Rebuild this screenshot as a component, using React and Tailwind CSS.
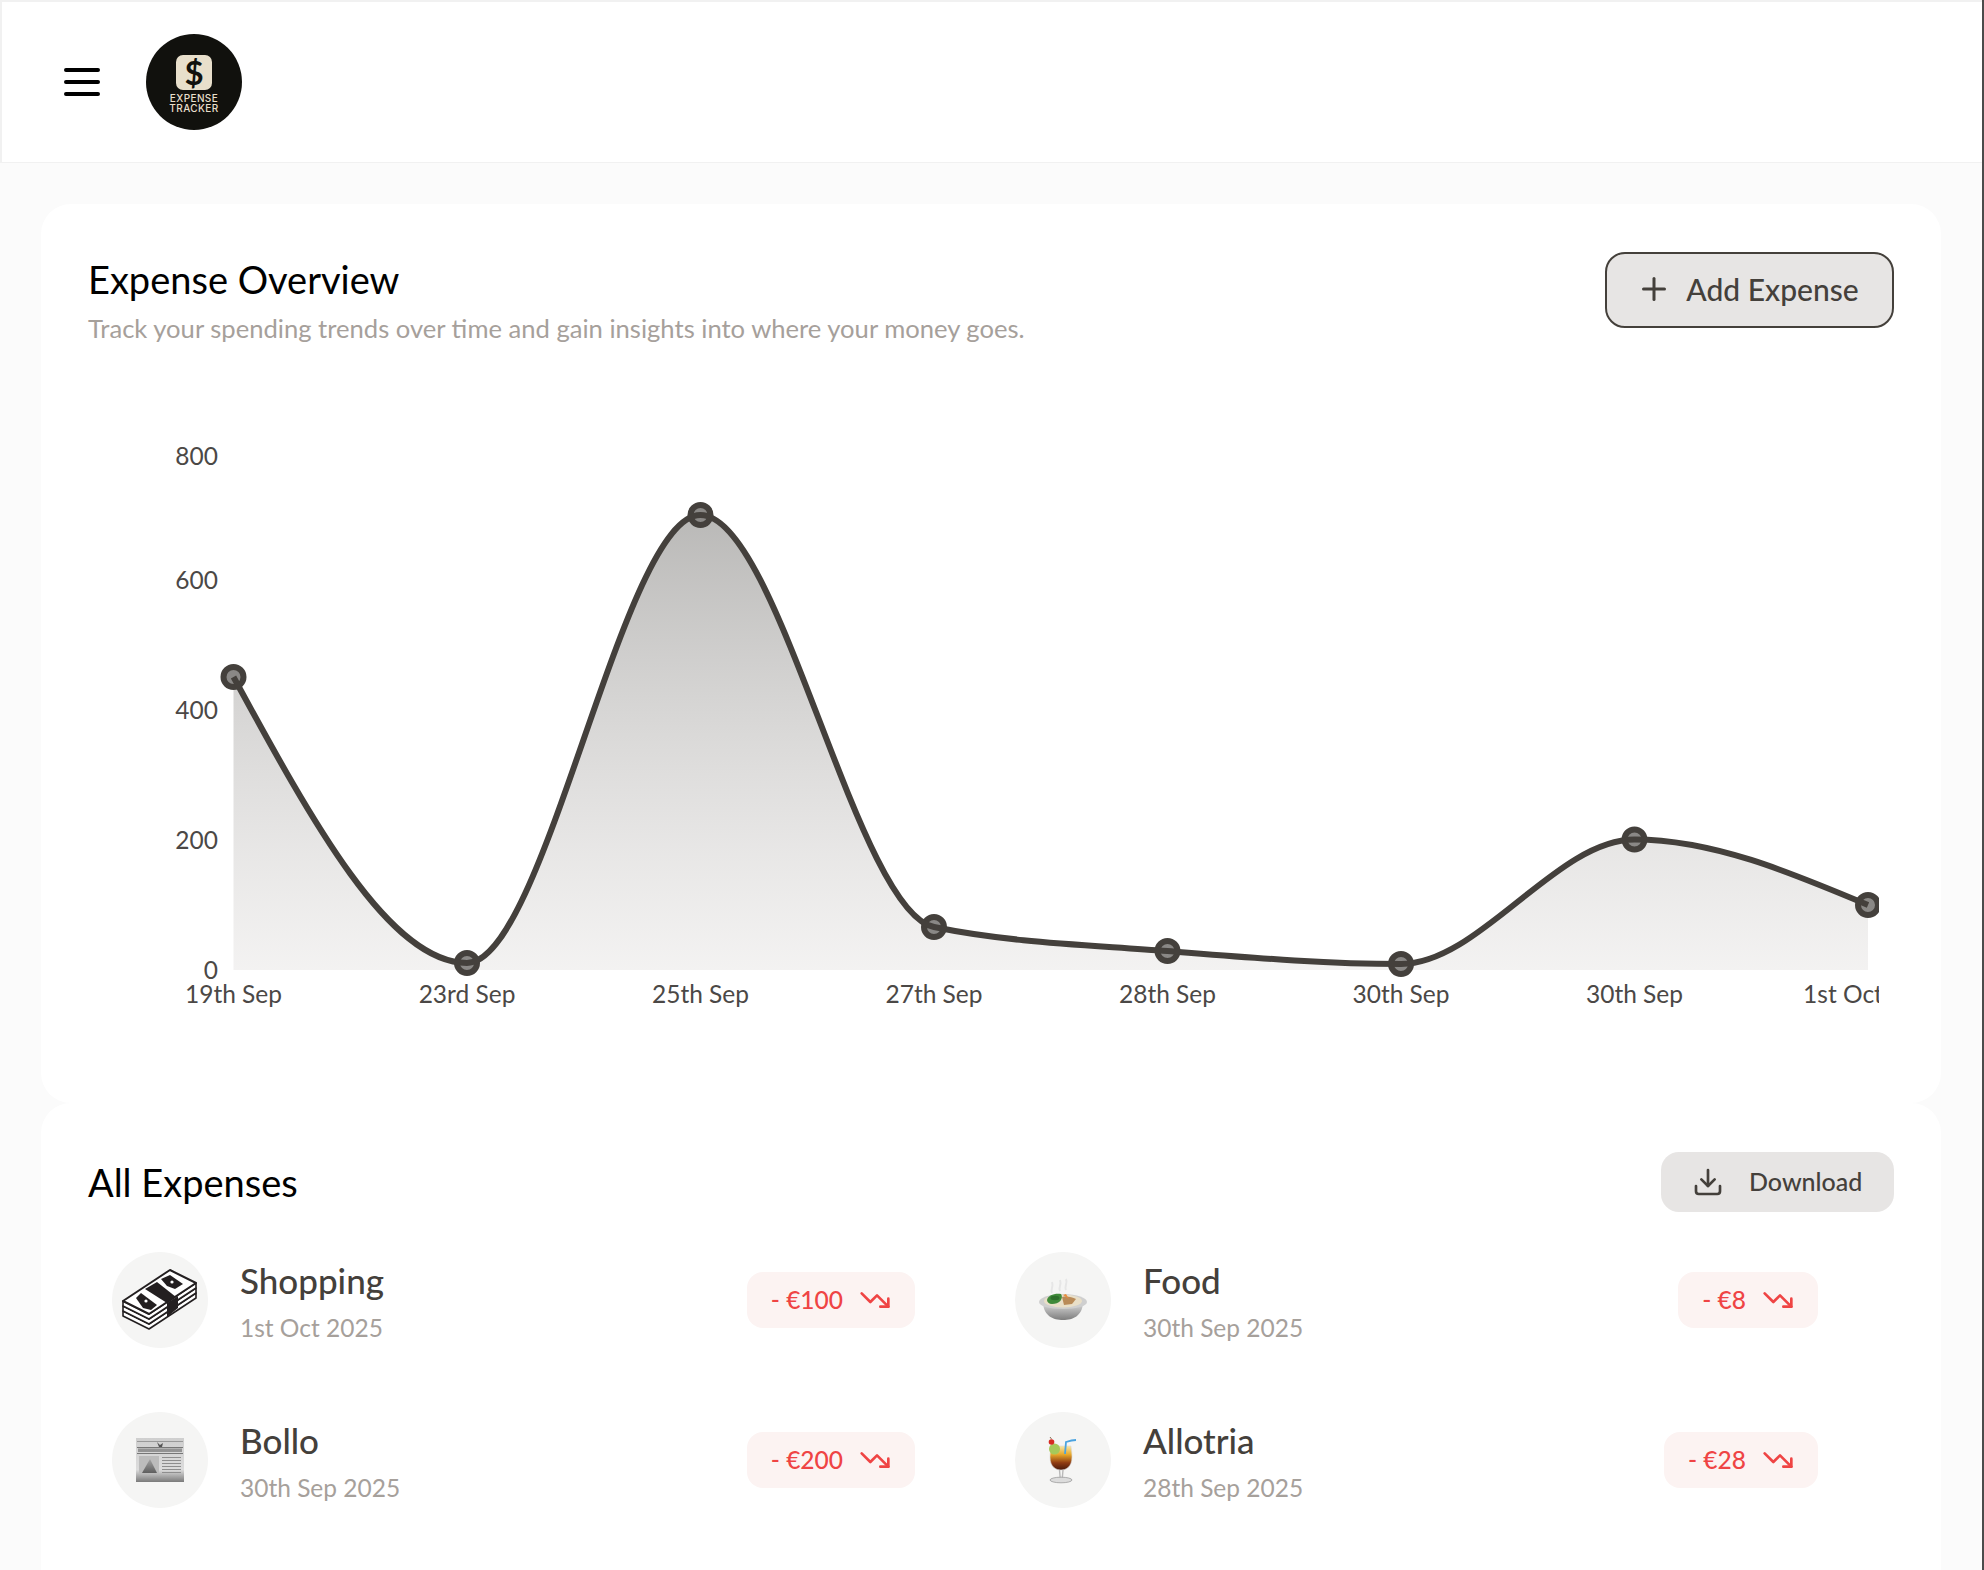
import React from "react";
import { Plus, Download, TrendingDown } from "lucide-react";

const fontFamily = { fontFamily: "Lato, 'Open Sans', sans-serif" };

const chartPoints = [
  { label: "19th Sep", x: 233.5, y: 677 },
  { label: "23rd Sep", x: 467, y: 963 },
  { label: "25th Sep", x: 700.5, y: 515 },
  { label: "27th Sep", x: 934, y: 927 },
  { label: "28th Sep", x: 1167.5, y: 951 },
  { label: "30th Sep", x: 1401, y: 964 },
  { label: "30th Sep", x: 1634.5, y: 839.5 },
  { label: "1st Oct", x: 1868, y: 905, labelX: 1843 },
];

const yTicks = [
  { label: "800", y: 456 },
  { label: "600", y: 580 },
  { label: "400", y: 710 },
  { label: "200", y: 840 },
  { label: "0", y: 970 },
];

// same maths as d3 curveMonotoneX
const monotonePath = (pts) => {
  const n = pts.length;
  const d = [];
  const m = [];
  for (let i = 0; i < n - 1; i++) d.push((pts[i + 1].y - pts[i].y) / (pts[i + 1].x - pts[i].x));
  for (let i = 1; i < n - 1; i++) {
    const h0 = pts[i].x - pts[i - 1].x;
    const h1 = pts[i + 1].x - pts[i].x;
    const p = (d[i - 1] * h1 + d[i] * h0) / (h0 + h1);
    m[i] = (Math.sign(d[i - 1]) + Math.sign(d[i])) * Math.min(Math.abs(d[i - 1]), Math.abs(d[i]), 0.5 * Math.abs(p)) || 0;
  }
  m[0] = (3 * d[0] - m[1]) / 2;
  m[n - 1] = (3 * d[n - 2] - m[n - 2]) / 2;
  let path = `M${pts[0].x},${pts[0].y}`;
  for (let i = 0; i < n - 1; i++) {
    const h = (pts[i + 1].x - pts[i].x) / 3;
    path += `C${pts[i].x + h},${pts[i].y + h * m[i]} ${pts[i + 1].x - h},${pts[i + 1].y - h * m[i + 1]} ${pts[i + 1].x},${pts[i + 1].y}`;
  }
  return path;
};

const MoneyIcon = () => (
  <svg width="76" height="62" viewBox="-1 -1 76 62">
    <g fill="#fff" stroke="#231f20" strokeWidth="1.6" strokeLinejoin="round">
      <path d="M0 46 L26 59 L73 28 L73 23 L26 54 L0 41Z" />
      <path d="M0 41 L26 54 L73 23 L73 18 L26 49 L0 36Z" />
      <path d="M0 36 L26 49 L73 18 L73 13 L26 44 L0 31Z" />
      <path d="M0 31 L26 44 L73 13 L47 0Z" strokeWidth="2" />
    </g>
    <path d="M13 28 L18 23 L34 35 L28 40 L20 38Z" fill="#231f20" />
    <path d="M22 19 L34 12 L53 27 L44 33Z" fill="#231f20" />
    <path d="M38 9 L47 5 L60 14 L52 19 L44 16Z" fill="#231f20" />
    <path d="M44 33 L55 26 L55 38 L44 47Z" fill="#231f20" />
    <circle cx="23" cy="31" r="1.6" fill="#fff" />
    <circle cx="49" cy="12" r="1.6" fill="#fff" />
  </svg>
);

const NewsIcon = () => (
  <svg width="48" height="44" viewBox="0 0 48 44">
    <defs>
      <linearGradient id="paperFade" x1="0" y1="0" x2="0" y2="1">
        <stop offset="0" stopColor="#cfcfcf" />
        <stop offset="0.72" stopColor="#dcdcdc" />
        <stop offset="1" stopColor="#7a7a7a" />
      </linearGradient>
      <linearGradient id="peakFade" x1="0" y1="0" x2="0" y2="1">
        <stop offset="0" stopColor="#a5a5a5" />
        <stop offset="1" stopColor="#5e5e5e" />
      </linearGradient>
    </defs>
    <rect x="0" y="0" width="48" height="44" fill="url(#paperFade)" />
    <path d="M21 4 L24 7 L27 5 L26 9 L23 9Z" fill="#555" />
    <rect x="1" y="3" width="46" height="1" fill="#999" />
    <rect x="1" y="9" width="46" height="1" fill="#777" />
    <rect x="2" y="10.5" width="44" height="3.5" fill="#7d7d7d" opacity="0.75" />
    <rect x="1" y="15" width="46" height="1" fill="#777" />
    <rect x="3" y="18" width="20" height="18" fill="#bcbcbc" />
    <path d="M6 35 L14 21 L21 35Z" fill="url(#peakFade)" />
    <g fill="#8e8e8e">
      <rect x="26" y="19" width="19" height="1" />
      <rect x="26" y="22" width="19" height="1" />
      <rect x="26" y="25" width="19" height="1" />
      <rect x="26" y="28" width="19" height="1" />
      <rect x="26" y="31" width="19" height="1" />
      <rect x="26" y="34" width="19" height="1" />
    </g>
  </svg>
);

const SoupIcon = () => (
  <svg width="48" height="44" viewBox="0 0 48 44">
    <defs>
      <linearGradient id="bowlFill" x1="0" y1="0" x2="0" y2="1">
        <stop offset="0" stopColor="#d9d9d9" />
        <stop offset="1" stopColor="#7d7d7d" />
      </linearGradient>
    </defs>
    <path d="M13 15 C11 11 15 9 13 4 M21 13 C19 9 23 7 21 2 M27 12 C25 8 29 5 27 1" stroke="#e6e6e6" strokeWidth="2" fill="none" />
    <path d="M4 25 C5 38 14 42 24 42 C34 42 43 38 44 25Z" fill="url(#bowlFill)" />
    <path d="M0 24 C0 20 10 16 24 16 C38 16 48 20 48 24 C48 28 38 31 24 31 C10 31 0 28 0 24Z" fill="#cfcfcf" />
    <ellipse cx="24" cy="23" rx="19" ry="6.5" fill="#e9dfc8" />
    <path d="M8 22 C9 17 16 15 22 16 C25 21 20 26 13 26 C10 26 8 24 8 22Z" fill="#3f8a3a" />
    <path d="M23 19 C28 18 33 19 37 21 L33 26 L25 27Z" fill="#b98b58" />
    <path d="M24 17 L30 21 L27 16Z" fill="#e88b3c" />
    <ellipse cx="16" cy="20" rx="4.5" ry="2.2" fill="#2d6f2b" />
  </svg>
);

const CocktailIcon = () => (
  <svg width="30" height="47" viewBox="0 0 30 47">
    <defs>
      <linearGradient id="drinkFill" x1="0" y1="0" x2="0" y2="1">
        <stop offset="0" stopColor="#f7e7a8" />
        <stop offset="0.35" stopColor="#e8a92c" />
        <stop offset="0.7" stopColor="#8f3b12" />
        <stop offset="1" stopColor="#4a190a" />
      </linearGradient>
    </defs>
    <path d="M2 20 C2 30 8 33 13 33 C18 33 24 30 24 20 C24 14 23 11 23 9 L4 9 C3 12 2 15 2 20Z" fill="url(#drinkFill)" stroke="#d8d8d8" strokeWidth="0.6" />
    <path d="M17 17 L18 5 C21 4 25 3 28 3" stroke="#4aa3e0" strokeWidth="1.8" fill="none" />
    <circle cx="6.5" cy="12" r="5.5" fill="#a6c95a" />
    <circle cx="3.5" cy="5" r="2.8" fill="#d62b22" />
    <path d="M3.5 2 L2 0" stroke="#6b4a2a" strokeWidth="0.8" />
    <path d="M11.5 33 L12.2 41 M15 33 L14.3 41" stroke="#b9b9b9" strokeWidth="1.4" />
    <ellipse cx="13" cy="43" rx="11" ry="2.8" fill="#dcdcdc" stroke="#9c9c9c" strokeWidth="0.8" />
  </svg>
);

const expenses = [
  { name: "Shopping", date: "1st Oct 2025", amount: "- €100", icon: <MoneyIcon /> },
  { name: "Food", date: "30th Sep 2025", amount: "- €8", icon: <SoupIcon /> },
  { name: "Bollo", date: "30th Sep 2025", amount: "- €200", icon: <NewsIcon /> },
  { name: "Allotria", date: "28th Sep 2025", amount: "- €28", icon: <CocktailIcon /> },
];

const Chart = () => {
  const line = monotonePath(chartPoints);
  const last = chartPoints[chartPoints.length - 1];
  const first = chartPoints[0];
  return (
    <svg width="1806" height="600" viewBox="88 440 1806 600" className="block mt-[96px]">
      <defs>
        <linearGradient id="areaFill" x1="0" y1="0" x2="0" y2="1">
          <stop offset="0" stopColor="#a8a7a5" stopOpacity="0.8" />
          <stop offset="1" stopColor="#e7e5e4" stopOpacity="0.5" />
        </linearGradient>
        <clipPath id="plotClip">
          <rect x="170" y="440" width="1709" height="600" />
        </clipPath>
      </defs>
      <path d={`${line}L${last.x},970L${first.x},970Z`} fill="url(#areaFill)" />
      <g clipPath="url(#plotClip)">
        {chartPoints.map((p, i) => (
          <circle key={i} cx={p.x} cy={p.y} r="10" fill="#8a8886" stroke="#44403c" strokeWidth="6" />
        ))}
        <path d={line} fill="none" stroke="#44403c" strokeWidth="6" />
      </g>
      {yTicks.map((t) => (
        <text key={t.label} x="218" y={t.y + 9} textAnchor="end" fontSize="24.5" fill="#4b4846">
          {t.label}
        </text>
      ))}
      <g clipPath="url(#plotClip)">
        {chartPoints.map((p, i) => (
          <text key={i} x={p.labelX || p.x} y="1003" textAnchor="middle" fontSize="24.5" fill="#4b4846">
            {p.label}
          </text>
        ))}
      </g>
    </svg>
  );
};

const ExpenseRow = ({ name, date, amount, icon }) => (
  <div className="flex items-center gap-8 px-6">
    <div className="w-24 h-24 rounded-full bg-stone-100 flex items-center justify-center shrink-0">{icon}</div>
    <div className="flex-1 min-w-0 pt-[3px]">
      <p className="text-[35px] leading-[40px] font-medium text-stone-700">{name}</p>
      <p className="text-[24.5px] leading-[32px] mt-3 text-stone-400">{date}</p>
    </div>
    <div className="mr-[52px] h-14 px-6 rounded-2xl bg-[#fcf3f2] flex items-center gap-4 text-[24.5px] font-medium text-[#ef4444]">
      <span>{amount}</span>
      <TrendingDown size={32} strokeWidth={2} />
    </div>
  </div>
);

const App = () => {
  return (
    <div className="h-screen overflow-hidden bg-[#fbfbfb] border-r-2 border-r-[#4b4b4b]" style={fontFamily}>
      <header className="h-[163px] bg-white border-t-2 border-l-2 border-b border-[#f1f1f1] flex items-center pl-[62px] gap-[46px]">
        <svg width="36" height="28" viewBox="0 0 36 28" className="shrink-0">
          <path d="M2 2H34M2 14H34M2 26H34" stroke="#000" strokeWidth="4" strokeLinecap="round" />
        </svg>
        <div className="w-24 h-24 rounded-full bg-[#11110d] flex flex-col items-center shrink-0">
          <div className="mt-[21px] w-[36px] h-[35px] rounded-[7px] bg-[#e8dfcb] flex items-center justify-center text-[#11110d] text-[33px] leading-none font-bold">
            $
          </div>
          <p className="mt-[3px] text-[10px] leading-[10px] font-medium tracking-[0.4px] text-[#e8dfcb] text-center" style={{ fontFamily: "Inter, sans-serif" }}>
            EXPENSE
            <br />
            TRACKER
          </p>
        </div>
      </header>
      <main className="px-[41px] pt-[41px]">
        <section className="bg-white rounded-[30px] h-[899px] px-[47px] pt-12">
          <div className="flex justify-between items-start">
            <div className="pt-[5px]">
              <h2 className="text-[38px] leading-[44px] font-normal text-black">Expense Overview</h2>
              <p className="text-[25.6px] leading-[32px] mt-[11px] text-stone-400">
                Track your spending trends over time and gain insights into where your money goes.
              </p>
            </div>
            <button className="w-[289px] h-[76px] rounded-[20px] border-2 border-stone-700 bg-stone-200 flex items-center justify-center gap-[14px] pr-1 pb-[2px] text-[30px] font-medium text-stone-700">
              <Plus size={36} strokeWidth={2} />
              Add Expense
            </button>
          </div>
          <Chart />
        </section>
        <section className="bg-white rounded-[30px] px-[47px] pt-[49px] pb-16 h-[600px]">
          <div className="flex justify-between items-center">
            <h2 className="text-[38px] leading-[56px] font-normal text-black">All Expenses</h2>
            <button className="w-[233px] h-[60px] rounded-[18px] bg-stone-200 flex items-center pl-[31px] gap-[25px] text-[25px] font-medium text-stone-700">
              <Download size={32} strokeWidth={2} />
              Download
            </button>
          </div>
          <div className="grid grid-cols-2 gap-y-16 mt-10">
            {expenses.map((e) => (
              <ExpenseRow key={e.name} {...e} />
            ))}
          </div>
        </section>
      </main>
    </div>
  );
};

export default App;
